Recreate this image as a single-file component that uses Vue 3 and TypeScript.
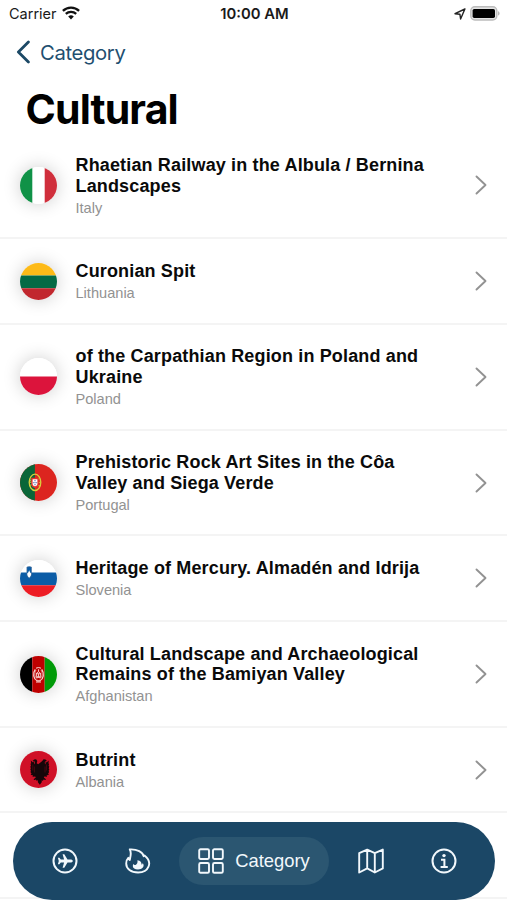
<script setup lang="ts">
interface Site {
  lines: string[]
  country: string
  flag: string
}

const sites: Site[] = [
  { lines: ['Rhaetian Railway in the Albula / Bernina', 'Landscapes'], country: 'Italy', flag: 'it' },
  { lines: ['Curonian Spit'], country: 'Lithuania', flag: 'lt' },
  { lines: ['of the Carpathian Region in Poland and', 'Ukraine'], country: 'Poland', flag: 'pl' },
  { lines: ['Prehistoric Rock Art Sites in the Côa', 'Valley and Siega Verde'], country: 'Portugal', flag: 'pt' },
  { lines: ['Heritage of Mercury. Almadén and Idrija'], country: 'Slovenia', flag: 'si' },
  { lines: ['Cultural Landscape and Archaeological', 'Remains of the Bamiyan Valley'], country: 'Afghanistan', flag: 'af' },
  { lines: ['Butrint'], country: 'Albania', flag: 'al' },
]
</script>

<template>
  <div class="screen">
    <div class="status">
      <div class="carrier">
        <span>Carrier</span>
        <svg class="wifi" width="18" height="14" viewBox="0 0 18 14" fill="none" stroke="#111">
          <path d="M.9 4.9a11.6 11.6 0 0 1 16.2 0" stroke-width="2.3" />
          <path d="M3.8 7.9a7.5 7.5 0 0 1 10.4 0" stroke-width="2.2" />
          <path d="M9 13.5 6.2 10.6a4 4 0 0 1 5.6 0z" fill="#111" stroke="none" />
        </svg>
      </div>
      <div class="clock">10:00 AM</div>
      <div class="indicators">
        <svg width="12" height="12" viewBox="0 0 12 12" fill="none" stroke="#222" stroke-width="1.4" stroke-linejoin="round">
          <path d="M10.9 1 1 5.7l4.9.5.7 4.8z" />
        </svg>
        <svg width="30" height="15" viewBox="0 0 30 15">
          <rect x=".8" y=".8" width="26" height="13.2" rx="4" fill="#e4e4e4" stroke="#bcbcbc" stroke-width="1.4" />
          <rect x="2.6" y="2.9" width="22.4" height="9" rx="1.6" fill="#000" />
          <path d="M28.2 5.2c1.7.6 1.7 3.8 0 4.4z" fill="#aaa" />
        </svg>
      </div>
    </div>

    <div class="back">
      <svg width="14" height="24" viewBox="0 0 14 24" fill="none" stroke="#1c4966" stroke-width="2.8" stroke-linecap="round" stroke-linejoin="round">
        <path d="M12.4 2 2.4 12l10 10" />
      </svg>
      <span>Category</span>
    </div>

    <h1>Cultural</h1>

    <ul class="list">
      <li v-for="site in sites" :key="site.country" class="row">
        <svg class="flag" width="37" height="37" viewBox="0 0 37 37">
          <g v-if="site.flag === 'it'">
            <path fill="#fff" d="M0 0h37v37H0z" />
            <path fill="#109247" d="M0 0h12.3v37H0z" />
            <path fill="#d02f3c" d="M24.7 0H37v37H24.7z" />
          </g>
          <g v-else-if="site.flag === 'lt'">
            <path fill="#fdba17" d="M0 0h37v12.4H0z" />
            <path fill="#046a45" d="M0 12.4h37v12.8H0z" />
            <path fill="#c1272e" d="M0 25.2h37V37H0z" />
          </g>
          <g v-else-if="site.flag === 'pl'">
            <path fill="#fff" d="M0 0h37v18.5H0z" />
            <path fill="#dc143c" d="M0 18.5h37V37H0z" />
          </g>
          <g v-else-if="site.flag === 'pt'">
            <path fill="#dc251f" d="M0 0h37v37H0z" />
            <path fill="#0a6638" d="M0 0h14.9v37H0z" />
            <ellipse cx="15" cy="18.3" rx="5.8" ry="8.2" fill="none" stroke="#d9cf3c" stroke-width="1.3" />
            <path d="M9.6 15.2c3 5.5 7.5 7.8 11 6M9.6 21.5c4-1 8-4.5 10-8.5M9.3 18.4h11.4" fill="none" stroke="#d9cf3c" stroke-width=".8" />
            <path d="M11.2 13.8h7.6v6.3c0 2.4-1.6 3.8-3.8 3.8s-3.8-1.4-3.8-3.8z" fill="#e4332d" />
            <path d="M12.6 15.2h4.8v4.6c0 1.6-.9 2.5-2.4 2.5s-2.4-.9-2.4-2.5z" fill="#fff" />
            <path d="M14.4 16h1.2v1.2h-1.2zm0 2h1.2v1.2h-1.2zm0 2h1.2v1.2h-1.2zM12.9 18h.9v1.2h-.9zm3.3 0h.9v1.2h-.9z" fill="#6b79b5" />
          </g>
          <g v-else-if="site.flag === 'si'">
            <path fill="#fff" d="M0 0h37v12.5H0z" />
            <path fill="#0b5ca6" d="M0 12.5h37v12.7H0z" />
            <path fill="#ed1c24" d="M0 25.2h37V37H0z" />
            <path d="M6.9 7.1q2.3-1 4.6 0v6.3c0 2.5-.9 4-2.3 4.8-1.4-.8-2.3-2.3-2.3-4.8z" fill="#0b5ca6" stroke="#4a6f99" stroke-width=".6" />
            <path d="m7.2 13.5 1.2-1.2.8-2 .8 2 1.2 1.2c0 2-.8 3.4-2 4.2-1.2-.8-2-2.2-2-4.2z" fill="#fff" />
          </g>
          <g v-else-if="site.flag === 'af'">
            <path fill="#000" d="M0 0h12.3v37H0z" />
            <path fill="#be0000" d="M12.3 0h12.4v37H12.3z" />
            <path fill="#009a08" d="M24.7 0H37v37H24.7z" />
            <g fill="none" stroke="#f7d8d5">
              <path d="M15.3 13.3c-3 4-1.8 9.8 1.8 11.5h2.8c3.6-1.7 4.8-7.5 1.8-11.5" stroke-width="1.2" />
              <path d="M16 14.1c-2.2 3.5-1 7.3 1.4 8.8M21 14.1c2.2 3.5 1 7.3-1.4 8.8" stroke-width=".6" />
              <path d="M16 12.2q2.5-1.4 5 0M16.2 21.3h4.6M16 26h5" stroke-width="1" />
              <path d="M16.6 20.8v-3.7q1.9-2.8 3.8 0v3.7zM18.5 13.3v2.3M18.5 18v2.8M16.2 17.7h4.6" stroke-width=".9" />
            </g>
          </g>
          <g v-else>
            <path fill="#d01027" d="M0 0h37v37H0z" />
            <path
              fill="#160609"
              d="m20.1 9.8 1.2-1.7 2 .2 1.5 1.5-1.9.2-.4 1.7.9 1.6V9.9l.9 1.3 2.3-1.9-.4 3.1.7.2-.5 2.1.7.7-.6 1.9.6.8-.7 1.8.6 1-1.1 1.5.8 1.1-2.4.7.7 1.3-2.8-.2-.6 1.1 2.2 1.6-.6.8-1.8-.6-.8 1.5-1-.8-.1 2.1-1.9 2.6-1.9-2.6-.1-2.1-1 .8-.8-1.5-1.8.6-.6-.8 2.2-1.6-.6-1.1-2.8.2.7-1.3-2.4-.7.8-1.1-1.1-1.5.6-1-.7-1.8.6-.8-.6-1.9.7-.7-.5-2.1.7-.2-.4-3.1 2.3 1.9.9-1.3v3.4l.9-1.6-.4-1.7-1.9-.2 1.5-1.5 2-.2 1.2 1.7-.6 2.2 1.4 1.1 1.4-1.1z"
              transform="translate(2.2 .2)"
            />
            <path d="M14.4 15.5v6M12.8 13.5v6M25 15.5v6M26.4 13.5v6" fill="none" stroke="#8d1020" stroke-width=".4" />
          </g>
        </svg>
        <div class="text">
          <div class="title">
            <div v-for="line in site.lines" :key="line">{{ line }}</div>
          </div>
          <div class="country">{{ site.country }}</div>
        </div>
        <svg class="chevron" width="12" height="20" viewBox="0 0 12 20" fill="none" stroke="#929292" stroke-width="1.9" stroke-linecap="round" stroke-linejoin="round">
          <path d="m1.5 1.5 9 8.5-9 8.5" />
        </svg>
      </li>
      <li class="row blank"></li>
    </ul>

    <nav class="tabs">
      <div class="tab">
        <svg width="26" height="26" viewBox="0 0 26 26" fill="none">
          <circle cx="13" cy="13" r="11.5" stroke="#f2f8fc" stroke-width="2" />
          <path fill="#f2f8fc" d="M20.9 13c0 .9-1.3 1.5-2.4 1.5h-3l-3.2 5.2h-1.7l1.5-5.2H8.8l-1.4 1.8H5.9L6.8 13l-.9-3.3h1.5l1.4 1.8h3.3l-1.5-5.2h1.7l3.2 5.2h3c1.1 0 2.4.6 2.4 1.5z" />
        </svg>
      </div>
      <div class="tab">
        <svg width="26" height="26" viewBox="0 0 26 26" fill="none">
          <path d="M4.8 1.4C12.2 1 17.9 4.1 18.6 8.2c.3-.3.6-.5.9-.8 4.1 3.3 5.6 7.5 4 11.3-1.5 3.7-5.4 5.8-10.4 5.8-7.1 0-11.9-3.8-11.9-9.1 0-2.2.8-4.3 2.1-5.6.2 1 .7 1.7 1.5 2.2C5.2 8.2 7 5.2 4.8 1.4z" stroke="#f2f8fc" stroke-width="1.9" stroke-linejoin="round" />
          <path d="M12.4 12.3c3.2.6 4.3 2.1 4.1 4.3.8-.2 1.2-.8 1.2-1.6 1.3 1.5 1.2 3.5-.1 4.8-1.1 1.1-2.6 1.6-4.6 1.6-3.2 0-5.2-1.5-5.2-3.5 0-.9.3-1.5.9-2 .4.9 1 1.2 1.8 1.2 1.6-.8 2.4-2.4 1.9-4.8z" fill="#f2f8fc" />
        </svg>
      </div>
      <div class="tab active">
        <svg width="26" height="26" viewBox="0 0 26 26" fill="none" stroke="#f2f8fc" stroke-width="1.9">
          <rect x="1.2" y="1.2" width="9.8" height="9.8" rx="1.4" />
          <rect x="15" y="1.2" width="9.8" height="9.8" rx="1.4" />
          <rect x="1.2" y="15" width="9.8" height="9.8" rx="1.4" />
          <rect x="15" y="15" width="9.8" height="9.8" rx="1.4" />
        </svg>
        <span>Category</span>
      </div>
      <div class="tab">
        <svg width="26" height="26" viewBox="0 0 26 26" fill="none" stroke="#f2f8fc" stroke-width="1.9" stroke-linejoin="round">
          <path d="M1.2 5.2 9.2 1.6l7.6 3.5 8-3.5v18.8l-8 4.1-7.6-4.1-8 4.1zM9.2 1.6v18.8M16.8 5.1v19.4" />
        </svg>
      </div>
      <div class="tab">
        <svg width="26" height="26" viewBox="0 0 26 26" fill="none" stroke="#f2f8fc">
          <circle cx="13" cy="13" r="11.5" stroke-width="2" />
          <circle cx="13" cy="7.6" r="1.7" fill="#f2f8fc" stroke="none" />
          <path d="M10 11.8h3.4v7.2M9.6 19.1h7.2" stroke-width="2" />
        </svg>
      </div>
    </nav>
  </div>
</template>

<style>
body {
  margin: 0;
  background: #fff;
}
</style>

<style scoped>
.screen {
  position: relative;
  width: 507px;
  height: 900px;
  overflow: hidden;
  background: #fff;
  font-family: Inter, "Liberation Sans", sans-serif;
}
.status {
  display: grid;
  grid-template-columns: 1fr auto 1fr;
  align-items: center;
  box-sizing: border-box;
  height: 28px;
  padding: 0 7px 1px 9px;
  color: #1a1a1a;
  font-size: 14.5px;
  line-height: 18px;
}
.carrier {
  display: flex;
  align-items: center;
  gap: 5.5px;
}
.wifi {
  margin-top: -1px;
}
.clock {
  font-weight: 600;
  font-size: 14.8px;
}
.indicators {
  display: flex;
  align-items: center;
  justify-content: flex-end;
  gap: 4px;
}
.back {
  display: flex;
  align-items: center;
  gap: 10px;
  height: 48px;
  padding-left: 16px;
  color: #1f4f70;
  font-size: 20.3px;
  letter-spacing: -0.37px;
}
h1 {
  margin: 0;
  height: 57.2px;
  padding-left: 25.5px;
  line-height: 66px;
  font-size: 41px;
  letter-spacing: -0.85px;
  font-weight: 700;
  color: #000;
}
.list {
  margin: 0;
  padding: 0;
  list-style: none;
}
.row {
  display: flex;
  align-items: center;
  box-sizing: border-box;
  padding: 21.8px 20px 20.4px;
  border-bottom: 2px solid #f4f4f4;
  font-family: "Liberation Sans", Arial, sans-serif;
}
.row.blank {
  height: 85.6px;
}
.flag {
  flex: none;
  margin-bottom: 1px;
  border-radius: 50%;
  box-shadow: 0 0 18px rgba(0, 0, 0, 0.2);
}
.text {
  flex: 1;
  margin-left: 18.5px;
}
.title {
  font-size: 18px;
  line-height: 20.6px;
  font-weight: 700;
  letter-spacing: 0.15px;
  color: #0a0a0a;
  white-space: nowrap;
}
.country {
  margin-top: 3.6px;
  font-size: 14.6px;
  line-height: 17px;
  color: #929292;
}
.chevron {
  flex: none;
  margin-bottom: 1px;
}
.tabs {
  position: absolute;
  left: 13px;
  bottom: 0;
  display: flex;
  align-items: center;
  box-sizing: border-box;
  width: 482px;
  height: 78px;
  padding: 0 15px;
  border-radius: 39px;
  background: #1b4766;
}
.tab {
  display: flex;
  align-items: center;
  justify-content: center;
  width: 73px;
  height: 48px;
}
.tab.active {
  gap: 11px;
  width: 150px;
  margin: 0 5px;
  border-radius: 24px;
  background: #2b5671;
  color: #f2f8fc;
  font-family: "Liberation Sans", Arial, sans-serif;
  font-size: 18.4px;
}
</style>
